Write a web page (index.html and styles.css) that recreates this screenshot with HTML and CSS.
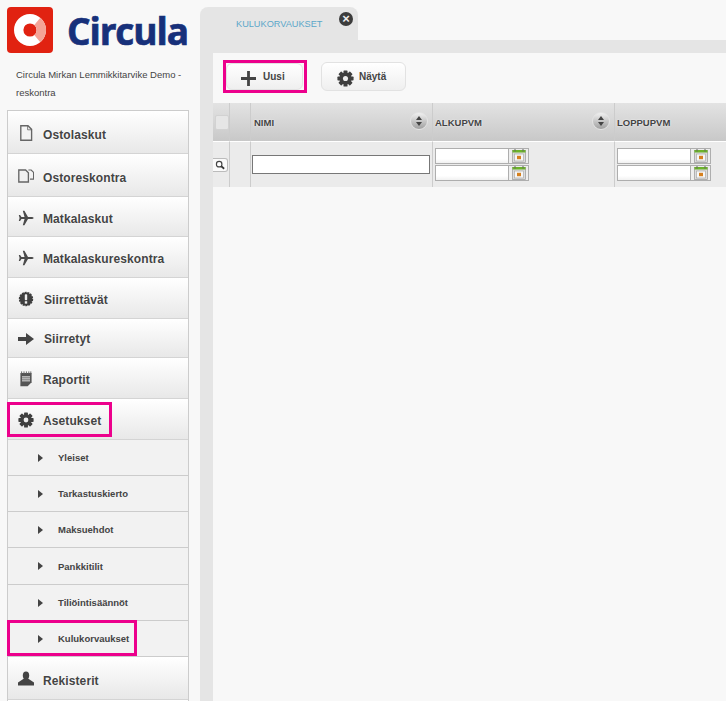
FILE: index.html
```html
<!DOCTYPE html>
<html lang="en">
<head>
  <meta charset="UTF-8">
  <meta name="viewport" content="width=device-width, initial-scale=1.0">
  <title>Kulukorvaukset</title>
  <link rel="stylesheet" href="styles.css">
</head>
<body>
  <svg class="sprites" width="0" height="0">
    <symbol id="i-file" viewBox="0 0 20 20"><path d="M3.500 1h9l4.500 4.500V19H3.500z" fill="#f4f4f4" stroke="#666" stroke-width="1.700"/><path d="M12 1v5h5" fill="none" stroke="#666" stroke-width="1"/></symbol>
    <symbol id="i-files" viewBox="0 0 20 20"><path d="M13 2.500h3.500l3 3V14H15" fill="none" stroke="#666" stroke-width="1.500"/><path d="M1 2.500h8.500l3.500 3.500v11.500H1z" fill="#f0f0f0" stroke="#666" stroke-width="1.700"/></symbol>
    <symbol id="i-plane" viewBox="0 0 20 20"><path d="M19.500 10c0-1-1.500-1.400-3-1.400h-4L8 1H6l2.200 7.600H4.300L2.600 6.300H1L2 10l-1 3.700h1.600l1.700-2.300h3.900L6 19h2l4.500-7.600h4c1.500 0 3-.4 3-1.400z" fill="#4a4a4a"/></symbol>
    <symbol id="i-alert" viewBox="0 0 20 20"><circle cx="10" cy="10" r="8" fill="#3f3f3f" stroke="#3f3f3f" stroke-width="2" stroke-dasharray="2.500 1"/><rect x="8.500" y="4" width="3" height="7.500" rx="1" fill="#eee"/><rect x="8.500" y="12.800" width="3" height="3" fill="#eee"/></symbol>
    <symbol id="i-arrow" viewBox="0 0 20 20"><path d="M0 7.500h10V2.500l10 7.500-10 7.500v-5H0z" fill="#444"/></symbol>
    <symbol id="i-report" viewBox="0 0 20 20"><path d="M3 2.500h14v11.500l-5 5H3z" fill="#555"/><path d="M4.500 .5v3M7.500 .5v3M10.500 .5v3M13.500 .5v3M16 .5v3" stroke="#666" stroke-width="1.200"/><path d="M5 6.500h10v6.500H5z" fill="#ccc"/><path d="M5 8.500h10M5 11h10" stroke="#666" stroke-width="1"/></symbol>
    <symbol id="i-gear" viewBox="0 0 20 20"><g fill="#3f3f3f"><rect x="7.600" y=".5" width="4.800" height="19" rx=".8"/><rect x="7.600" y=".5" width="4.800" height="19" rx=".8" transform="rotate(45 10 10)"/><rect x="7.600" y=".5" width="4.800" height="19" rx=".8" transform="rotate(90 10 10)"/><rect x="7.600" y=".5" width="4.800" height="19" rx=".8" transform="rotate(135 10 10)"/></g><circle cx="10" cy="10" r="5.500" fill="none" stroke="#3f3f3f" stroke-width="3.400"/><circle cx="10" cy="10" r="3" fill="#eee"/></symbol>
    <symbol id="i-user" viewBox="0 0 20 20"><ellipse cx="10" cy="5.500" rx="4" ry="5" fill="#444"/><path d="M7.500 9.500L0 14.500V18h20v-3.500l-7.500-5z" fill="#444"/></symbol>
    <symbol id="i-cal" viewBox="0 0 14 14"><rect x=".5" y="1.500" width="13" height="12" fill="#dcdcdc" stroke="#999" stroke-width=".7"/><rect x=".5" y="1" width="13" height="2.500" fill="#6cb32a"/><path d="M3 0v2.500M11 0v2.500" stroke="#666" stroke-width="1"/><rect x="2.500" y="5" width="9" height="7" fill="#f6f6f6" stroke="#aaa" stroke-width=".7"/><rect x="5" y="6.800" width="4" height="3.400" fill="#d5801f"/></symbol>
  </svg>

  <div class="page">
    <aside class="sidebar">
      <div class="logo">
        <svg class="logo-mark" viewBox="0 0 46 46">
          <rect width="46" height="46" rx="4" fill="#e12211"/>
          <circle cx="23" cy="23" r="11.300" fill="none" stroke="#fff" stroke-width="9.400"/>
          <path d="M33.300 10.700A16 16 0 0 1 33.300 35.300L27.300 28.100A6.700 6.700 0 0 0 27.300 17.900z" fill="#f4a397"/>
        </svg>
        <span class="logo-text">Circula</span>
      </div>
      <p class="company">Circula Mirkan Lemmikkitarvike Demo - reskontra</p>

      <ul class="menu">
        <li class="menu-item"><svg class="menu-icon"><use href="#i-file"/></svg>Ostolaskut</li>
        <li class="menu-item"><svg class="menu-icon"><use href="#i-files"/></svg>Ostoreskontra</li>
        <li class="menu-item h40"><svg class="menu-icon"><use href="#i-plane"/></svg>Matkalaskut</li>
        <li class="menu-item h41"><svg class="menu-icon"><use href="#i-plane"/></svg>Matkalaskureskontra</li>
        <li class="menu-item h41 nudged"><svg class="menu-icon"><use href="#i-alert"/></svg>Siirrettävät</li>
        <li class="menu-item h39 nudged"><svg class="menu-icon"><use href="#i-arrow"/></svg>Siirretyt</li>
        <li class="menu-item h41"><svg class="menu-icon"><use href="#i-report"/></svg>Raportit</li>
        <li class="menu-item h41"><svg class="menu-icon"><use href="#i-gear"/></svg>Asetukset<span class="mark mark-settings"></span></li>
        <li class="sub-item"><span class="tri"></span>Yleiset</li>
        <li class="sub-item"><span class="tri"></span>Tarkastuskierto</li>
        <li class="sub-item"><span class="tri"></span>Maksuehdot</li>
        <li class="sub-item h37"><span class="tri"></span>Pankkitilit</li>
        <li class="sub-item"><span class="tri"></span>Tiliöintisäännöt</li>
        <li class="sub-item"><span class="tri"></span>Kulukorvaukset<span class="mark mark-expenses"></span></li>
        <li class="menu-item"><svg class="menu-icon"><use href="#i-user"/></svg>Rekisterit</li>
        <li class="menu-tail"></li>
      </ul>
    </aside>

    <main class="main">
      <div class="tabs">
        <div class="tab">KULUKORVAUKSET<span class="tab-close">×</span></div>
      </div>
      <div class="panel">
        <div class="content">
          <div class="toolbar">
            <div class="mark-wrap">
              <button class="btn btn-new" type="button">
                <svg class="btn-icon" viewBox="0 0 16 16"><path d="M6.500 0h3v6.500H16v3H9.500V16h-3V9.500H0v-3h6.500z" fill="#444"/></svg>Uusi
              </button>
            </div>
            <button class="btn btn-show" type="button"><svg class="btn-icon gear"><use href="#i-gear"/></svg>Näytä</button>
          </div>

          <div class="grid">
            <div class="th"><span class="check"></span></div>
            <div class="th"></div>
            <div class="th th-label">NIMI<span class="sort"></span></div>
            <div class="th th-label th-date">ALKUPVM<span class="sort"></span></div>
            <div class="th th-label th-date th-last">LOPPUPVM</div>

            <div class="td"><span class="search-btn">
              <svg viewBox="0 0 12 12" width="10" height="10"><circle cx="5" cy="5" r="3.300" fill="#fff" stroke="#444" stroke-width="1.400"/><path d="M7.500 7.500l3.500 3" stroke="#333" stroke-width="2"/></svg>
            </span></div>
            <div class="td"></div>
            <div class="td td-name"><input class="name-input" type="text"></div>
            <div class="td td-dates">
              <div class="date"><input type="text"><span class="cal"><svg width="14" height="14"><use href="#i-cal"/></svg></span></div>
              <div class="date"><input type="text"><span class="cal"><svg width="14" height="14"><use href="#i-cal"/></svg></span></div>
            </div>
            <div class="td td-dates td-last">
              <div class="date"><input type="text"><span class="cal"><svg width="14" height="14"><use href="#i-cal"/></svg></span></div>
              <div class="date"><input type="text"><span class="cal"><svg width="14" height="14"><use href="#i-cal"/></svg></span></div>
            </div>
          </div>
        </div>
      </div>
    </main>
  </div>
</body>
</html>
```

FILE: styles.css
```css
body {
  background-color: #f8f8f8;
  font-family: "Liberation Sans", Arial, sans-serif;
  color: #444;
  margin: 0;
  overflow: hidden;
}
.sprites {
  position: absolute;
}
.page {
  display: flex;
  height: 701px;
  overflow: hidden;
}

/* sidebar */
.sidebar {
  width: 200px;
  flex: none;
  padding: 7px 11px 0 7px;
  box-sizing: border-box;
}
.logo {
  display: flex;
  align-items: center;
  height: 46px;
}
.logo-mark {
  width: 46px;
  height: 46px;
  flex: none;
}
.logo-text {
  margin-left: 14px;
  font-family: "Open Sans", sans-serif;
  font-weight: 700;
  font-size: 37px;
  letter-spacing: -1.1px;
  color: #17307a;
  -webkit-text-stroke: 0.7px #17307a;
}
.company {
  margin: 13px 0 0;
  padding-left: 9px;
  font-size: 9.5px;
  line-height: 18px;
  height: 44px;
}
.menu {
  list-style: none;
  margin: 0;
  padding: 0;
  border: 1px solid #ccc;
  border-bottom: 0;
  width: 182px;
  box-sizing: border-box;
}
.menu-item {
  position: relative;
  display: flex;
  align-items: center;
  height: 43px;
  box-sizing: border-box;
  padding: 5px 0 0 35px;
  border-bottom: 1px solid #d4d4d4;
  background: linear-gradient(#fff, #e8e8e8);
  font-size: 12px;
  letter-spacing: 0.1px;
  font-weight: bold;
  text-shadow: 0 0 2px #fff;
}
.menu-item.nudged {
  padding-left: 36px;
}
.menu-item.h41 {
  padding-top: 3px;
}
.menu-item.h39 {
  padding-top: 1px;
}
.menu-icon {
  position: absolute;
  left: 10px;
  top: 50%;
  margin-top: -7px;
  width: 16px;
  height: 16px;
}
.sub-item {
  position: relative;
  display: flex;
  align-items: center;
  height: 36px;
  box-sizing: border-box;
  padding-left: 30px;
  border-bottom: 1px solid #ccc;
  background: #f2f2f2;
  font-size: 9.5px;
  font-weight: bold;
}
.tri {
  width: 0;
  height: 0;
  margin-right: 15px;
  border-left: 5px solid #444;
  border-top: 4px solid transparent;
  border-bottom: 4px solid transparent;
}
.menu-tail {
  height: 1px;
  background: #fff;
}
.h37 { height: 37px; }
.h39 { height: 39px; }
.h40 { height: 40px; }
.h41 { height: 41px; }

/* pink marks lying over the page */
.mark {
  position: absolute;
  border: 3px solid #ec008c;
  box-sizing: border-box;
}
.mark-settings {
  left: -1px;
  top: 3px;
  width: 105px;
  height: 35px;
}
.mark-expenses {
  left: -1px;
  top: -1px;
  width: 130px;
  height: 36px;
}

/* main */
.main {
  flex: 1;
  min-width: 0;
  display: flex;
  flex-direction: column;
}
.tabs {
  padding-top: 7px;
  display: flex;
}
.tab {
  position: relative;
  width: 158px;
  height: 33px;
  box-sizing: border-box;
  padding: 12px 0 0 36px;
  background: #e5e5e5;
  border-radius: 8px 8px 0 0;
  font-size: 9.2px;
  line-height: 11px;
  color: #5ba7c9;
}
.tab-close {
  position: absolute;
  right: 5px;
  top: 5px;
  width: 14px;
  height: 14px;
  border-radius: 50%;
  background: #3c3c3c;
  color: #eee;
  font-size: 13px;
  font-weight: bold;
  line-height: 14px;
  text-align: center;
}
.panel {
  flex: 1;
  display: flex;
  background: #e5e5e5;
  padding: 13px 0 0 13px;
}
.content {
  flex: 1;
  min-width: 0;
  background: #f8f8f8;
}
.toolbar {
  display: flex;
  align-items: center;
  height: 47px;
  padding: 0 0 3px 10px;
  gap: 14px;
}
.mark-wrap {
  display: flex;
  padding: 3px 4px 3px 3px;
  outline: 3px solid #ec008c;
  outline-offset: -3px;
  box-sizing: border-box;
  width: 84px;
  height: 33px;
}
.btn {
  display: flex;
  align-items: center;
  border: 1px solid #e2e2e2;
  border-radius: 6px;
  background: linear-gradient(#fff, #efefef);
  font-family: "Liberation Sans", Arial, sans-serif;
  font-size: 10px;
  font-weight: bold;
  color: #444;
  padding: 0;
}
.btn-new {
  width: 77px;
  height: 27px;
  padding-left: 14px;
}
.btn-show {
  width: 85px;
  height: 29px;
  padding-left: 15px;
}
.btn-icon {
  width: 15px;
  height: 15px;
  margin: 3px 7px 0 0;
}
.btn-icon.gear {
  width: 17px;
  height: 17px;
  margin: 4px 5px 0 0;
}

/* grid */
.grid {
  display: grid;
  grid-template-columns: 17px 21px 182px 182px 1fr;
  grid-template-rows: 38px 46px;
}
.th {
  position: relative;
  display: flex;
  align-items: center;
  background: linear-gradient(#e3e3e3, #c8c8c8);
  border-right: 1px solid #ccc;
  font-size: 9.5px;
  font-weight: bold;
  box-sizing: border-box;
}
.th-last {
  border-right: 0;
}
.th-label {
  padding-left: 3px;
  text-shadow: 0 0 2px #fff;
}
.th-date {
  padding-left: 2px;
}
.check {
  width: 13px;
  height: 13px;
  margin-left: 2px;
  border: 1px solid #d2d2d2;
  border-radius: 2px;
  background: #e6e6e6;
}
.sort {
  position: absolute;
  right: 4px;
  top: 9px;
  width: 18px;
  height: 18px;
  border-radius: 50%;
  box-sizing: border-box;
  border: 1px solid #e4e4e4;
  background: linear-gradient(#f0f0f0, #a0a0a0);
}
.sort::before,
.sort::after {
  content: "";
  position: absolute;
  left: 5px;
  border-left: 3px solid transparent;
  border-right: 3px solid transparent;
}
.sort::before {
  top: 3px;
  border-bottom: 4px solid #444;
}
.sort::after {
  bottom: 3px;
  border-top: 4px solid #444;
}
.td {
  display: flex;
  align-items: center;
  border-top: 1px solid #fff;
  background: #ebebeb;
  border-right: 1px solid #ccc;
  box-sizing: border-box;
  min-width: 0;
}
.search-btn {
  display: flex;
  align-items: center;
  justify-content: center;
  width: 15px;
  height: 14px;
  box-sizing: border-box;
  border: 1px solid #bbb;
  border-left: 0;
  border-radius: 0 3px 3px 0;
  background: #fafafa;
}
.td-name {
  padding: 0 1px 0 1px;
}
.name-input {
  width: 178px;
  height: 19px;
  box-sizing: border-box;
  border: 1px solid #777;
  margin: 0;
  padding: 0;
  background: #fff;
}
.td-dates {
  flex-direction: column;
  align-items: flex-start;
  justify-content: center;
  padding-left: 2px;
  gap: 1px;
}
.td-last {
  border-right: 0;
}
.date {
  display: flex;
  height: 16px;
  width: 94px;
  box-sizing: border-box;
  border: 1px solid #aeaeae;
  background: #ebebeb;
}
.date input {
  width: 73px;
  height: 14px;
  box-sizing: border-box;
  border: 0;
  border-right: 1px solid #aeaeae;
  margin: 0;
  padding: 0;
  background: linear-gradient(#fff 70%, #f1f1f1);
}
.cal {
  flex: 1;
  display: flex;
  align-items: center;
  justify-content: center;
  background: #eee;
}
```
